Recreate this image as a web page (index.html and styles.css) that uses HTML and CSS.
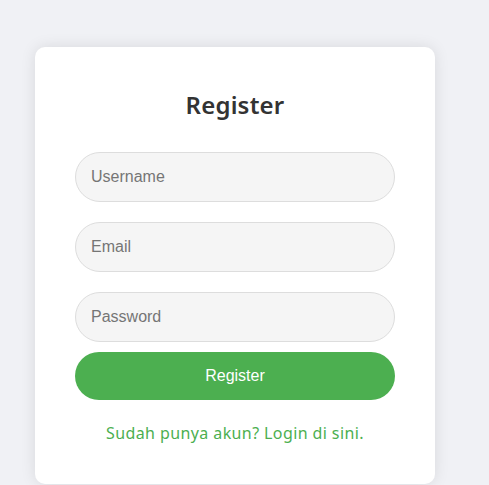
FILE: index.html
```html
<!DOCTYPE html>
<html lang="id">
<head>
<meta charset="utf-8">
<title>Register</title>
<link rel="stylesheet" href="styles.css">
</head>
<body>
  <div class="card">
    <h2 class="title">Register</h2>
    <form class="form">
      <input class="field" type="text" placeholder="Username">
      <input class="field" type="email" placeholder="Email">
      <input class="field" type="password" placeholder="Password">
      <button class="btn" type="button">Register</button>
    </form>
    <p class="note"><a class="link" href="#">Sudah punya akun? Login di sini.</a></p>
  </div>
</body>
</html>
```

FILE: styles.css
```css
html, body {
  margin: 0;
  padding: 0;
}
body {
  background: #f0f1f5;
  font-family: "Noto Sans", "Open Sans", sans-serif;
  padding: 47px 0 0 35px;
  height: 485px;
  box-sizing: border-box;
  overflow: hidden;
}
.card {
  width: 400px;
  box-sizing: border-box;
  background: #fff;
  border-radius: 10px;
  box-shadow: 0 0 15px rgba(0, 0, 0, 0.1);
  padding: 40px 40px 40px;
  text-align: center;
  height: 437px;
}
.title {
  margin: 0 0 29px;
  font-size: 24px;
  line-height: 36px;
  font-weight: 600;
  letter-spacing: 0.2px;
  color: #333;
}
.form {
  display: flex;
  flex-direction: column;
}
.field {
  height: 50px;
  box-sizing: border-box;
  margin: 0 0 20px;
  padding: 0 15px;
  border: 1px solid #ddd;
  border-radius: 25px;
  background: #f5f5f5;
  font-family: "Liberation Sans", Arial, sans-serif;
  font-size: 16px;
  color: #333;
  outline: none;
}
.field:nth-of-type(3) {
  margin-bottom: 10px;
}
.field::placeholder {
  color: #757575;
}
.btn {
  height: 48px;
  border: none;
  border-radius: 25px;
  background: #4caf50;
  color: #fff;
  font-family: "Liberation Sans", Arial, sans-serif;
  font-size: 16px;
  cursor: pointer;
}
.note {
  margin: 22px 0 0;
  font-size: 16px;
  line-height: 22px;
  letter-spacing: 0.4px;
}
.link {
  color: #4caf50;
  text-decoration: none;
}
```
